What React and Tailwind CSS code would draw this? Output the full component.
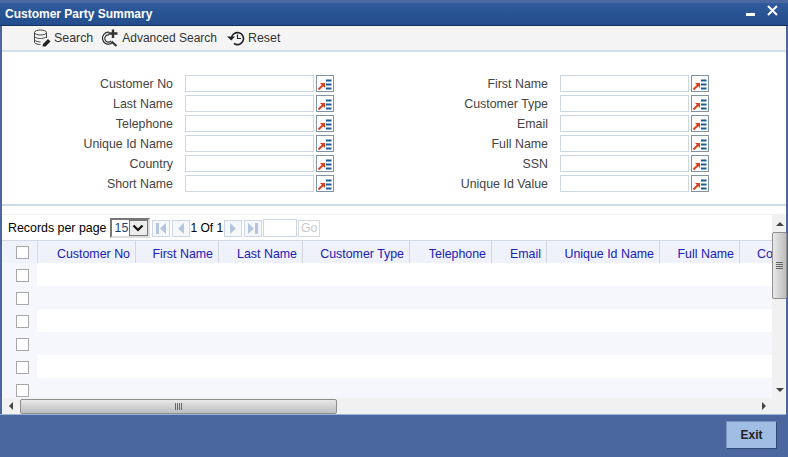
const left = ['Customer No', 'Last Name', 'Telephone', 'Unique Id Name', 'Country', 'Short Name'];
const right = ['First Name', 'Customer Type', 'Email', 'Full Name', 'SSN', 'Unique Id Value'];
const columns = [
  { name: 'Customer No', w: 'w-[98px]' },
  { name: 'First Name', w: 'w-[83px]' },
  { name: 'Last Name', w: 'w-[84px]' },
  { name: 'Customer Type', w: 'w-[107px]' },
  { name: 'Telephone', w: 'w-[82px]' },
  { name: 'Email', w: 'w-[55px]' },
  { name: 'Unique Id Name', w: 'w-[113px]' },
  { name: 'Full Name', w: 'w-[80px]' },
];

function LovIcon() {
  return (
    <button className="w-[18px] h-[17px] mb-[2px] border border-[#7f93a3] bg-white p-0 flex items-center justify-center shrink-0">
      <svg width="16" height="15" viewBox="0 0 16 15">
        <path d="M1.5 13.5 L6 9" stroke="#d9401c" strokeWidth="2" />
        <path d="M3 7 H8 V12 Z" fill="#d9401c" />
        <path d="M9 4.5h5.5M9 8.5h5.5M9 12.5h5.5" stroke="#1c5a98" strokeWidth="2" />
      </svg>
    </button>
  );
}

function Field({ label }) {
  return (
    <div className="flex items-center h-[20px]">
      <label className="w-[183px] text-right text-[#444444] pr-[12px] shrink-0">{label}</label>
      <input className="w-[129px] h-[17px] mb-[2px] border border-[#ccd6e0] bg-white mr-[2px] shrink-0" />
      <LovIcon />
    </div>
  );
}

function PagerBtn({ path }) {
  return (
    <button className="w-[18px] h-[17px] border border-[#cdd6e4] bg-[#f6f7fb] flex items-center justify-center p-0 shrink-0">
      <svg width="12" height="13" viewBox="0 0 12 13">
        <path d={path} fill="#b4c5dc" />
      </svg>
    </button>
  );
}

function Check() {
  return <input type="checkbox" className="appearance-none block w-[13px] h-[13px] bg-white border border-[#a8a8a8]" />;
}

export default function App() {
  const rows = [0, 1, 2, 3, 4, 5];
  return (
    <div className="w-[788px] h-[457px] flex flex-col overflow-hidden bg-[#4a689f] px-[2px] font-['Liberation_Sans',Arial,sans-serif] text-[12.4px]">
      {/* Title bar */}
      <div className="mt-[3px] -mx-[2px] pl-[5px] pr-[10px] h-[23px] flex items-center justify-between bg-gradient-to-b from-[#2f5b9c] to-[#234d8c] border-b border-[#16325f] shrink-0">
        <span className="text-white text-[12px] font-bold">Customer Party Summary</span>
        <div className="flex items-start gap-[12px] h-[18px]">
          <span className="block w-[9px] h-[3px] bg-white mt-[8px]"></span>
          <svg width="11" height="11" viewBox="0 0 11 11">
            <path d="M1 1 L10 10 M10 1 L1 10" stroke="white" strokeWidth="2" />
          </svg>
        </div>
      </div>

      {/* Toolbar */}
      <div className="h-[26px] flex items-center pl-[31px] bg-[#f4f4f4] border-b-2 border-[#d3dfe6] shrink-0 text-[#333333]">
        <button className="flex items-center gap-[3px] mr-[8px]">
          <svg width="18" height="18" viewBox="0 0 18 18" fill="none" stroke="#444" strokeWidth="1">
            <ellipse cx="7.5" cy="3.5" rx="6" ry="2.5" />
            <path d="M1.5 3.5V13c0 1.4 2.5 2.5 6 2.5M13.5 3.5V9M1.5 7c0 1.4 2.5 2.5 6 2.5s6-1.1 6-2.5M1.5 10.5c0 1.3 2.5 2.4 6 2.4" />
            <path d="M10 15l5-5 2.5 2.5-5 5h-3z" fill="#222" stroke="none" />
          </svg>
          Search
        </button>
        <button className="flex items-center gap-[3px] mr-[10px]">
          <svg width="18" height="18" viewBox="0 0 18 18" fill="none" stroke="#333" strokeWidth="1.2">
            <path d="M8 3.2A6 6 0 1 0 11 14" />
            <path d="M8 6A3.6 3.6 0 1 0 10 12" />
            <path d="M10.5 12.5l5 4.5" strokeWidth="2.2" />
            <path d="M12 0.5v8.5M7.5 4.5h9" strokeWidth="2.4" />
          </svg>
          <span className="text-[12px]">Advanced Search</span>
        </button>
        <button className="flex items-center gap-[3px]">
          <svg width="18" height="16" viewBox="0 0 18 16" fill="none" stroke="#222" strokeWidth="1.6">
            <path d="M4.5 8A6 6 0 1 1 7 13.5" />
            <path d="M10.5 4.5V8.5H14" strokeWidth="1.2" />
            <path d="M0 6.5H8L4.2 10.5Z" fill="#222" stroke="none" />
          </svg>
          Reset
        </button>
      </div>

      {/* Search form */}
      <div className="h-[154px] bg-white border-b-2 border-[#cfd9e6] pt-[22px] flex shrink-0">
        <div className="w-[375px]">
          {left.map(l => <Field key={l} label={l} />)}
        </div>
        <div>
          {right.map(r => <Field key={r} label={r} />)}
        </div>
      </div>

      {/* Results */}
      <div className="h-[208px] bg-white flex flex-col shrink-0 pt-[8px]">
        <div className="flex flex-1 min-h-0 border-t border-[#f3f3f3]">
          <div className="w-[770px] flex flex-col overflow-hidden">
            <div className="h-[25px] flex items-center pl-[6px] pt-[1px] text-black shrink-0">
              <span className="mr-[3px]">Records per page</span>
              <div className="w-[40px] h-[20px] flex border-2 border-t-[#777] border-l-[#777] border-r-[#ddd] border-b-[#ddd] mr-[2px] shrink-0">
                <span className="flex-1 pl-[3px] leading-[16px] text-[#1c3f6e]">15</span>
                <span className="w-[19px] bg-[#ececec] border border-[#777] flex items-center justify-center">
                  <svg width="12" height="8" viewBox="0 0 12 8" fill="none">
                    <path d="M1.5 1.5 L6 6 L10.5 1.5" stroke="#111" strokeWidth="2.2" />
                  </svg>
                </span>
              </div>
              <div className="flex items-center gap-[2px]">
                <PagerBtn path="M1 1h3v11H1zM11 1v11L5 6.5z" />
                <PagerBtn path="M9 1v11L3 6.5z" />
                <span className="-mx-[1px] text-[12px]">1 Of 1</span>
                <PagerBtn path="M3 1v11l6-5.5z" />
                <PagerBtn path="M1 1v11l6-5.5zM8 1h3v11H8z" />
                <input className="w-[34px] h-[18px] -ml-[1px] border border-[#ccd6e0] bg-white" />
                <button className="w-[22px] h-[17px] -ml-[1px] border border-[#d5d9de] text-[#c8c8c8] flex items-center justify-center">Go</button>
              </div>
            </div>

            <div className="flex-1 min-h-0 overflow-hidden">
              <div className="flex h-[23px] bg-[#eff1fb] border-t border-[#d2d9e6] w-[900px]">
                <div className="w-[36px] border-r border-[#d6dbe6] pl-[14px] pt-[5px] shrink-0"><Check /></div>
                {columns.map(c => (
                  <div key={c.name} className={`${c.w} shrink-0 border-r border-[#d0d6e2] text-right pr-[5px] pt-[4px] text-[#2020b8]`}>{c.name}</div>
                ))}
                <div className="pl-[17px] pt-[4px] text-[#2020b8] whitespace-nowrap">Country</div>
              </div>
              {rows.map(i => (
                <div key={i} className={`flex h-[23px] ${i % 2 === 1 ? 'bg-[#f6f7fd]' : 'bg-white'}`}>
                  <div className="w-[35px] bg-[#f6f7fd] pl-[14px] pt-[6px] shrink-0"><Check /></div>
                </div>
              ))}
            </div>
          </div>

          {/* Vertical scrollbar */}
          <div className="w-[14px] flex flex-col items-start bg-[#f1f1f1] shrink-0">
            <div className="w-[15px] h-[17px] flex items-center justify-center shrink-0">
              <span className="block w-0 h-0 border-l-[4px] border-r-[4px] border-b-[4px] border-l-transparent border-r-transparent border-b-[#444]"></span>
            </div>
            <div className="w-[15px] h-[67px] rounded-[2px] border border-[#8f8f8f] bg-gradient-to-r from-[#e8e8e8] to-[#bdbdbd] flex flex-col items-center justify-center gap-[1px] shrink-0">
              <span className="block w-[7px] h-px bg-[#666]"></span>
              <span className="block w-[7px] h-px bg-[#666]"></span>
              <span className="block w-[7px] h-px bg-[#666]"></span>
              <span className="block w-[7px] h-px bg-[#666]"></span>
            </div>
            <div className="flex-1"></div>
            <div className="w-[15px] h-[17px] flex items-center justify-center shrink-0">
              <span className="block w-0 h-0 border-l-[4px] border-r-[4px] border-t-[4px] border-l-transparent border-r-transparent border-t-[#444]"></span>
            </div>
          </div>
        </div>

        {/* Horizontal scrollbar */}
        <div className="h-[16px] flex items-center bg-[#f1f1f1] shrink-0">
          <div className="w-[18px] flex items-center justify-center shrink-0">
            <span className="block w-0 h-0 border-t-[4px] border-b-[4px] border-r-[4px] border-t-transparent border-b-transparent border-r-[#444]"></span>
          </div>
          <div className="w-[317px] h-[15px] rounded-[2px] border border-[#8f8f8f] bg-gradient-to-b from-[#e8e8e8] to-[#bdbdbd] flex items-center justify-center gap-[1px] shrink-0">
            <span className="block w-px h-[7px] bg-[#666]"></span>
            <span className="block w-px h-[7px] bg-[#666]"></span>
            <span className="block w-px h-[7px] bg-[#666]"></span>
            <span className="block w-px h-[7px] bg-[#666]"></span>
          </div>
          <div className="flex-1"></div>
          <div className="w-[26px] flex items-center justify-start pl-[2px] shrink-0">
            <span className="block w-0 h-0 border-t-[4px] border-b-[4px] border-l-[4px] border-t-transparent border-b-transparent border-l-[#444]"></span>
          </div>
        </div>
      </div>

      {/* Footer */}
      <div className="flex-1 flex items-start justify-end pr-[9px] pt-[6px] border-t border-[#9db3d3] -mx-[2px] mr-0">
        <button className="w-[51px] h-[28px] bg-[#a0bde4] border border-[#7a94bb] border-r-[#2f4a78] border-b-[#2f4a78] font-bold text-[#222222] text-[12px]">Exit</button>
      </div>
    </div>
  );
}
